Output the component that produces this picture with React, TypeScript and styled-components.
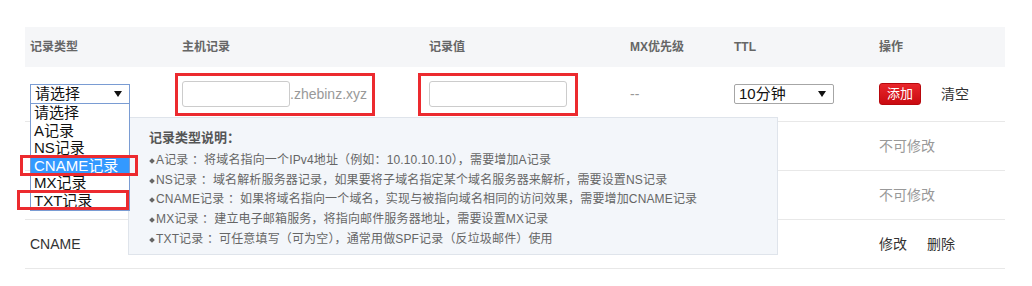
import styled, { createGlobalStyle } from "styled-components";

const GlobalStyle = createGlobalStyle`
  html, body {
    margin: 0;
    padding: 0;
    background: #fff;
  }
  body {
    font-family: "Liberation Sans", "Noto Sans CJK SC", sans-serif;
    color: #333;
  }
`;

const cols = "152px 247px 201px 104px 145px 131px";

const typeOptions = ["请选择", "A记录", "NS记录", "CNAME记录", "MX记录", "TXT记录"];

const helpLines = [
  ["A记录", "：将域名指向一个IPv4地址（例如：10.10.10.10），需要增加A记录"],
  ["NS记录", "：域名解析服务器记录，如果要将子域名指定某个域名服务器来解析，需要设置NS记录"],
  ["CNAME记录", "：如果将域名指向一个域名，实现与被指向域名相同的访问效果，需要增加CNAME记录"],
  ["MX记录", "：建立电子邮箱服务，将指向邮件服务器地址，需要设置MX记录"],
  ["TXT记录", "：可任意填写（可为空），通常用做SPF记录（反垃圾邮件）使用"],
];

const Arrow = () => (
  <svg width="8" height="6" viewBox="0 0 8 6">
    <path d="M0 0h8L4 6z" fill="#111" />
  </svg>
);

export default function App() {
  return (
    <>
      <GlobalStyle />
      <Page>
        <Table>
          <HeadRow>
            <HeadCell>记录类型</HeadCell>
            <HeadCell>主机记录</HeadCell>
            <HeadCell>记录值</HeadCell>
            <HeadCell>MX优先级</HeadCell>
            <HeadCell>TTL</HeadCell>
            <HeadCell>操作</HeadCell>
          </HeadRow>

          <Row $h={55}>
            <Cell>
              <SelectWrap>
                <FakeSelect $focused>
                  <span>请选择</span>
                  <Arrow />
                </FakeSelect>
                <OptionList>
                  {typeOptions.map((o, i) => (
                    <Option key={o} $active={i === 3}>{o}</Option>
                  ))}
                  <Mark $left={-11} $top={51} $w={118} $h={21} />
                  <Mark $left={-14} $top={86} $w={112} $h={20} />
                </OptionList>
              </SelectWrap>
            </Cell>
            <Cell>
              <RedBox $shift={-2} $pl={4} $pr={5}>
                <TextInput $w={108} />
                <Suffix>.zhebinz.xyz</Suffix>
              </RedBox>
            </Cell>
            <Cell>
              <RedBox $shift={-6} $pl={8} $pr={8}>
                <TextInput $w={138} />
              </RedBox>
            </Cell>
            <Cell>
              <Muted>--</Muted>
            </Cell>
            <Cell>
              <FakeSelect $w={100}>
                <span>10分钟</span>
                <Arrow />
              </FakeSelect>
            </Cell>
            <Cell>
              <Actions>
                <AddButton>添加</AddButton>
                <LinkText>清空</LinkText>
              </Actions>
            </Cell>
          </Row>

          <Row $h={49}>
            <Cell />
            <Cell />
            <Cell />
            <Cell />
            <Cell />
            <Cell>
              <Muted>不可修改</Muted>
            </Cell>
          </Row>

          <Row $h={49}>
            <Cell />
            <Cell />
            <Cell />
            <Cell />
            <Cell />
            <Cell>
              <Muted>不可修改</Muted>
            </Cell>
          </Row>

          <Row $h={49}>
            <Cell>CNAME</Cell>
            <Cell />
            <Cell />
            <Cell />
            <Cell />
            <Cell>
              <Actions>
                <LinkText>修改</LinkText>
                <LinkText>删除</LinkText>
              </Actions>
            </Cell>
          </Row>

          <HelpPanel>
            <HelpTitle>记录类型说明：</HelpTitle>
            {helpLines.map(([k, v]) => (
              <HelpLine key={k}>
                <Bullet />
                {k} {v}
              </HelpLine>
            ))}
          </HelpPanel>
        </Table>
      </Page>
    </>
  );
}

const Page = styled.div`
  padding: 27px 0 0 25px;
`;

const Table = styled.div`
  position: relative;
  width: 980px;
`;

const HeadRow = styled.div`
  display: grid;
  grid-template-columns: ${cols};
  align-items: center;
  height: 40px;
  background: #f5f6f8;
`;

const HeadCell = styled.div`
  padding-left: 5px;
  font-size: 12px;
  font-weight: bold;
  color: #666;
  line-height: 16px;
`;

const Row = styled.div<{ $h: number }>`
  display: grid;
  grid-template-columns: ${cols};
  align-items: center;
  height: ${(p) => p.$h}px;
  box-sizing: border-box;
  border-bottom: 1px solid #e8e8e8;
`;

const Cell = styled.div`
  padding-left: 5px;
  font-size: 14px;
  line-height: 18px;
  color: #333;
  display: flex;
  align-items: center;
`;

const SelectWrap = styled.div`
  position: relative;
  z-index: 3;
`;

const FakeSelect = styled.div<{ $focused?: boolean; $w?: number }>`
  box-sizing: border-box;
  width: ${(p) => p.$w ?? 100}px;
  height: 20px;
  padding: 0 7px 0 4px;
  display: flex;
  align-items: center;
  justify-content: space-between;
  background: #fff;
  border: 1px solid ${(p) => (p.$focused ? "#7a9cd3" : "#a6a6a6")};
  border-radius: ${(p) => (p.$focused ? "0" : "2px")};
  font-size: 15px;
  line-height: 18px;
  color: #111;
`;

const OptionList = styled.div`
  position: absolute;
  top: 20px;
  left: 0;
  width: 100px;
  box-sizing: border-box;
  background: #fff;
  border: 1px solid #7a9cd3;
  border-top: none;
`;

const Option = styled.div<{ $active?: boolean }>`
  height: 17.6px;
  line-height: 17.6px;
  padding-left: 3px;
  font-size: 15px;
  color: ${(p) => (p.$active ? "#fff" : "#111")};
  background: ${(p) => (p.$active ? "#3399ff" : "transparent")};
`;

const Mark = styled.div<{ $left: number; $top: number; $w: number; $h: number }>`
  position: absolute;
  left: ${(p) => p.$left}px;
  top: ${(p) => p.$top}px;
  width: ${(p) => p.$w}px;
  height: ${(p) => p.$h}px;
  box-sizing: border-box;
  border: 3px solid #ec2a2f;
`;

const RedBox = styled.div<{ $shift: number; $pl: number; $pr: number }>`
  margin-left: ${(p) => p.$shift - 5}px;
  box-sizing: border-box;
  height: 43px;
  display: flex;
  align-items: center;
  padding: 0 ${(p) => p.$pr}px 0 ${(p) => p.$pl}px;
  border: 3px solid #ec2a2f;
`;

const TextInput = styled.div<{ $w: number }>`
  box-sizing: border-box;
  width: ${(p) => p.$w}px;
  height: 26px;
  border: 1px solid #cccccc;
  border-radius: 3px;
  background: #fff;
`;

const Suffix = styled.span`
  font-size: 14px;
  color: #999;
`;

const Muted = styled.span`
  font-size: 14px;
  color: #999;
`;

const Actions = styled.div`
  display: flex;
  align-items: center;
  gap: 20px;
`;

const AddButton = styled.div`
  box-sizing: border-box;
  width: 42px;
  height: 22px;
  display: flex;
  align-items: center;
  justify-content: center;
  border: 1px solid #b8080d;
  border-radius: 3px;
  background: linear-gradient(#e8262b, #c90a10);
  color: #fff;
  font-size: 13px;
`;

const LinkText = styled.span`
  font-size: 14px;
  color: #333;
`;

const HelpPanel = styled.div`
  position: absolute;
  left: 103px;
  top: 90px;
  z-index: 2;
  box-sizing: border-box;
  width: 650px;
  height: 138px;
  padding: 10px 0 0 20px;
  background: #f3f6fa;
  border: 1px solid #dfe4eb;
`;

const HelpTitle = styled.div`
  font-size: 13px;
  font-weight: bold;
  color: #555;
  line-height: 20px;
  margin-bottom: 3px;
`;

const HelpLine = styled.div`
  display: flex;
  align-items: center;
  font-size: 12px;
  color: #666;
  line-height: 19.7px;
  white-space: pre;
  letter-spacing: 0.15px;
`;

const Bullet = styled.span`
  display: inline-block;
  width: 4px;
  height: 4px;
  margin: 0 2px 0 1px;
  background: #666;
  transform: rotate(45deg);
`;
